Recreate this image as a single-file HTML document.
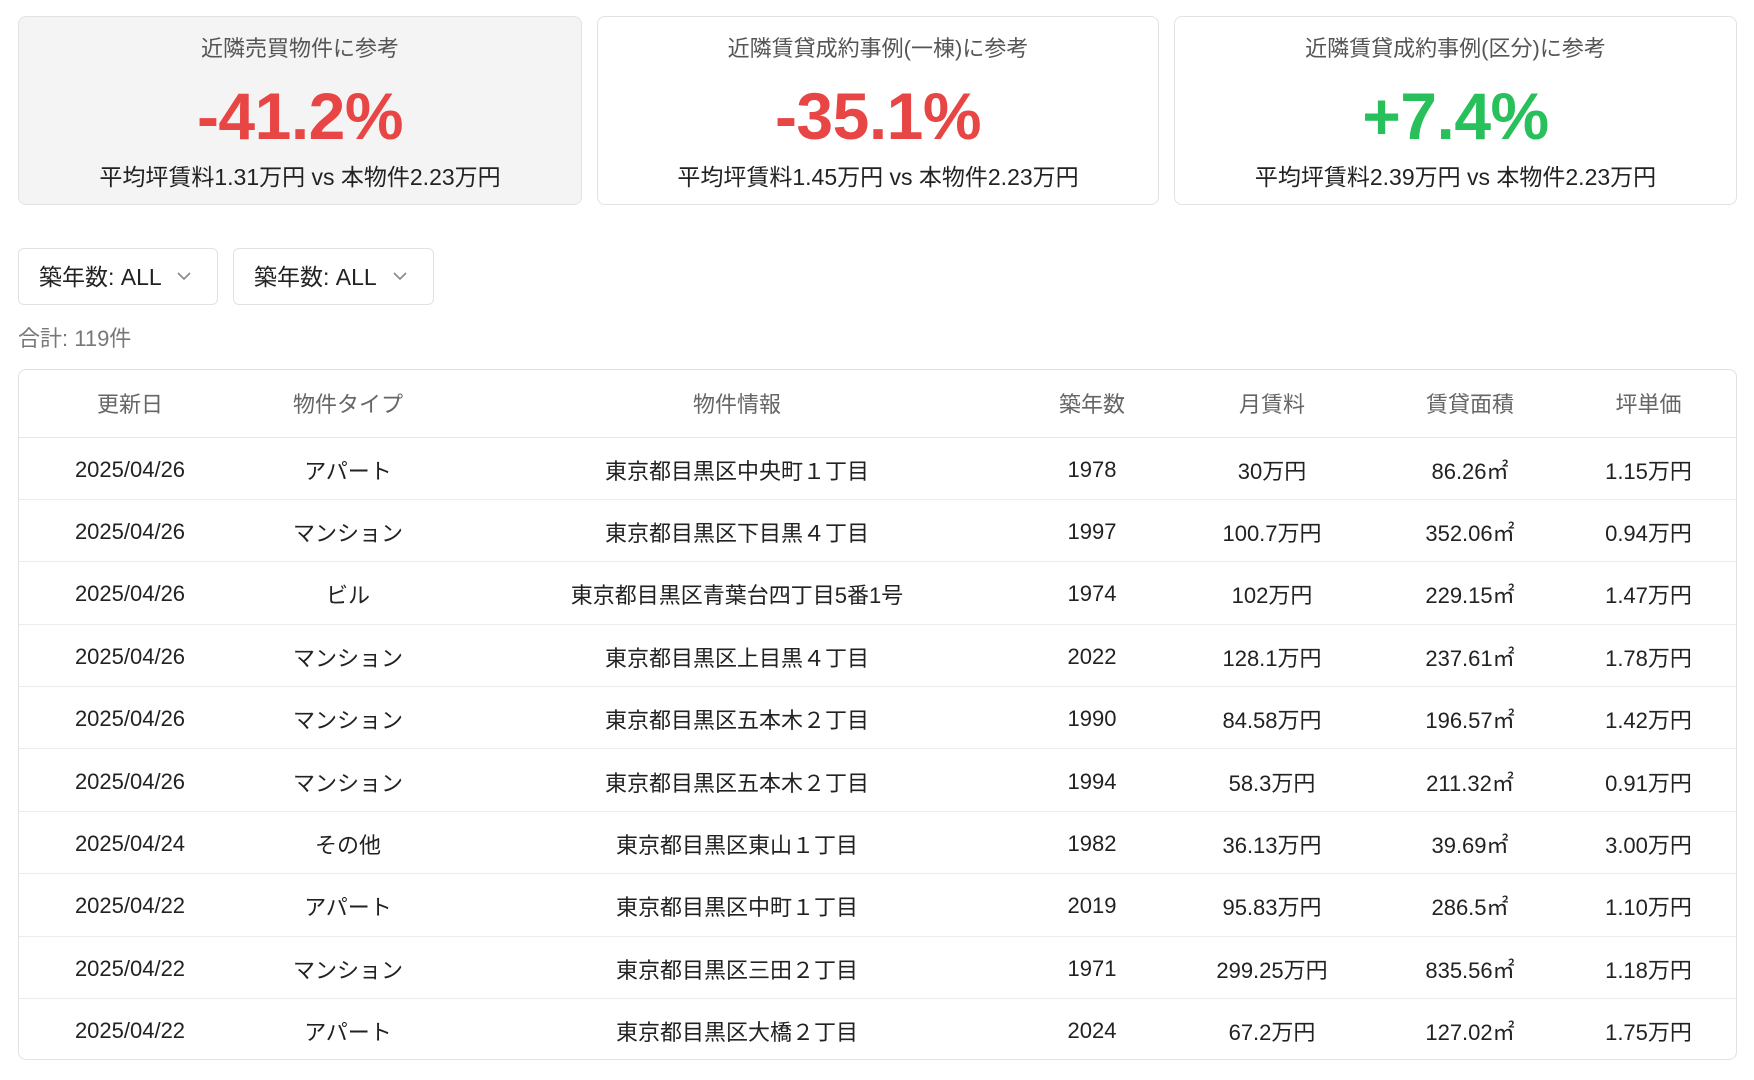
<!DOCTYPE html>
<html><head><meta charset="utf-8"><style>
*{box-sizing:border-box;margin:0;padding:0}
body{width:1754px;height:1080px;background:#fff;font-family:"Liberation Sans","Noto Sans CJK JP",sans-serif;color:#222;position:relative;overflow:hidden}
.card{position:absolute;top:16px;height:189px;border:1.5px solid #e2e2e2;border-radius:8px;text-align:center;background:#fff}
.card .t{position:absolute;top:17px;left:0;right:0;font-size:22px;color:#555;line-height:30px}
.card .p{position:absolute;top:62px;left:0;right:0;font-size:66px;font-weight:bold;line-height:74px;letter-spacing:-0.5px}
.card .s{position:absolute;top:145px;left:0;right:0;font-size:23px;line-height:30px;color:#222}
.red{color:#e84545}.green{color:#28c05a}
.f{position:absolute;top:248px;height:57px;border:1.5px solid #e2e2e2;border-radius:6px;font-size:23px;line-height:56px;padding-left:20px}
.f svg{position:absolute;right:26px;top:23px}
.tot{position:absolute;left:18px;top:322px;font-size:22px;color:#777;line-height:34px}
.tb{position:absolute;left:18px;top:369px;width:1719px;height:691px;border:1.5px solid #e2e2e2;border-radius:8px;overflow:hidden}
table{border-collapse:collapse;width:100%;table-layout:fixed}
th{height:67px;font-weight:normal;color:#666;font-size:22px;border-bottom:1.5px solid #e6e6e6}
td{height:62.4px;font-size:22px;text-align:center;border-bottom:1.5px solid #ececec;padding-top:3px}
tr:last-child td{border-bottom:none}
</style></head><body>
<div class="card" style="left:18px;width:564px;background:#f4f4f4"><div class="t">近隣売買物件に参考</div><div class="p red">-41.2%</div><div class="s">平均坪賃料1.31万円 vs 本物件2.23万円</div></div>
<div class="card" style="left:597px;width:562px"><div class="t">近隣賃貸成約事例(一棟)に参考</div><div class="p red">-35.1%</div><div class="s">平均坪賃料1.45万円 vs 本物件2.23万円</div></div>
<div class="card" style="left:1174px;width:563px"><div class="t">近隣賃貸成約事例(区分)に参考</div><div class="p green">+7.4%</div><div class="s">平均坪賃料2.39万円 vs 本物件2.23万円</div></div>
<div class="f" style="left:18px;width:200px">築年数: ALL<svg width="14" height="9" viewBox="0 0 14 9"><path d="M1 1l6 6 6-6" fill="none" stroke="#888" stroke-width="1.6"/></svg></div>
<div class="f" style="left:233px;width:201px">築年数: ALL<svg width="14" height="9" viewBox="0 0 14 9"><path d="M1 1l6 6 6-6" fill="none" stroke="#888" stroke-width="1.6"/></svg></div>
<div class="tot">合計: 119件</div>
<div class="tb"><table>
<colgroup><col style="width:222px"><col style="width:214px"><col style="width:564px"><col style="width:146px"><col style="width:214px"><col style="width:182px"><col></colgroup>
<tr><th>更新日</th><th>物件タイプ</th><th>物件情報</th><th>築年数</th><th>月賃料</th><th>賃貸面積</th><th>坪単価</th></tr>
<tr><td>2025/04/26</td><td>アパート</td><td>東京都目黒区中央町１丁目</td><td>1978</td><td>30万円</td><td>86.26㎡</td><td>1.15万円</td></tr>
<tr><td>2025/04/26</td><td>マンション</td><td>東京都目黒区下目黒４丁目</td><td>1997</td><td>100.7万円</td><td>352.06㎡</td><td>0.94万円</td></tr>
<tr><td>2025/04/26</td><td>ビル</td><td>東京都目黒区青葉台四丁目5番1号</td><td>1974</td><td>102万円</td><td>229.15㎡</td><td>1.47万円</td></tr>
<tr><td>2025/04/26</td><td>マンション</td><td>東京都目黒区上目黒４丁目</td><td>2022</td><td>128.1万円</td><td>237.61㎡</td><td>1.78万円</td></tr>
<tr><td>2025/04/26</td><td>マンション</td><td>東京都目黒区五本木２丁目</td><td>1990</td><td>84.58万円</td><td>196.57㎡</td><td>1.42万円</td></tr>
<tr><td>2025/04/26</td><td>マンション</td><td>東京都目黒区五本木２丁目</td><td>1994</td><td>58.3万円</td><td>211.32㎡</td><td>0.91万円</td></tr>
<tr><td>2025/04/24</td><td>その他</td><td>東京都目黒区東山１丁目</td><td>1982</td><td>36.13万円</td><td>39.69㎡</td><td>3.00万円</td></tr>
<tr><td>2025/04/22</td><td>アパート</td><td>東京都目黒区中町１丁目</td><td>2019</td><td>95.83万円</td><td>286.5㎡</td><td>1.10万円</td></tr>
<tr><td>2025/04/22</td><td>マンション</td><td>東京都目黒区三田２丁目</td><td>1971</td><td>299.25万円</td><td>835.56㎡</td><td>1.18万円</td></tr>
<tr><td>2025/04/22</td><td>アパート</td><td>東京都目黒区大橋２丁目</td><td>2024</td><td>67.2万円</td><td>127.02㎡</td><td>1.75万円</td></tr>
</table></div>
</body></html>
